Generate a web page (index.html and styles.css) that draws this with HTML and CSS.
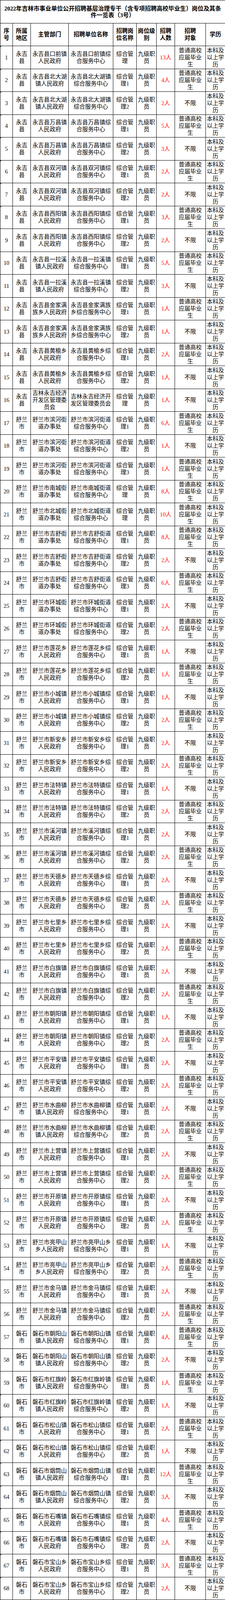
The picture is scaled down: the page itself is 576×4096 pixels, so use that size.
FILE: index.html
```html
<!DOCTYPE html>
<html lang="zh-CN">
<head>
<meta charset="utf-8">
<title>2022年吉林市事业单位公开招聘基层治理专干岗位及其条件一览表（3号）</title>
<link rel="stylesheet" href="styles.css">
</head>
<body>
<table class="jobs">
<colgroup>
<col class="c1"><col class="c2"><col class="c3"><col class="c4"><col class="c5"><col class="c6"><col class="c7"><col class="c8"><col class="c9">
</colgroup>
<thead>
<tr><th colspan="9" class="title">2022年吉林市事业单位公开招聘基层治理专干（含专项招聘高校毕业生）岗位及其条<br>件一览表（3号）</th></tr>
<tr class="head"><th>序<br>号</th><th>所属<br>地区</th><th>主管部门</th><th>招聘单位名称</th><th>招聘岗<br>位名称</th><th>岗位级<br>别</th><th>招聘<br>人数</th><th>招聘<br>对象</th><th>学历</th></tr>
</thead>
<tbody>
<tr><td class="g">1</td><td>永吉<br>县</td><td>永吉县口前镇<br>人民政府</td><td>永吉县口前镇综<br>合服务中心</td><td>综合管<br>理</td><td>九级职<br>员</td><td class="n">13人</td><td>普通高校<br>应届毕业<br>生</td><td>本科及<br>以上学<br>历</td></tr>
<tr><td class="g">2</td><td>永吉<br>县</td><td>永吉县北大湖<br>镇人民政府</td><td>永吉县北大湖镇<br>综合服务中心</td><td>综合管<br>理1</td><td>九级职<br>员</td><td class="n">4人</td><td>普通高校<br>应届毕业<br>生</td><td>本科及<br>以上学<br>历</td></tr>
<tr><td class="g">3</td><td>永吉<br>县</td><td>永吉县北大湖<br>镇人民政府</td><td>永吉县北大湖镇<br>综合服务中心</td><td>综合管<br>理2</td><td>九级职<br>员</td><td class="n">2人</td><td>不限</td><td>本科及<br>以上学<br>历</td></tr>
<tr><td class="g">4</td><td>永吉<br>县</td><td>永吉县万昌镇<br>人民政府</td><td>永吉县万昌镇综<br>合服务中心</td><td>综合管<br>理1</td><td>九级职<br>员</td><td class="n">5人</td><td>普通高校<br>应届毕业<br>生</td><td>本科及<br>以上学<br>历</td></tr>
<tr><td class="g">5</td><td>永吉<br>县</td><td>永吉县万昌镇<br>人民政府</td><td>永吉县万昌镇综<br>合服务中心</td><td>综合管<br>理2</td><td>九级职<br>员</td><td class="n">3人</td><td>不限</td><td>本科及<br>以上学<br>历</td></tr>
<tr><td class="g">6</td><td>永吉<br>县</td><td>永吉县双河镇<br>人民政府</td><td>永吉县双河镇综<br>合服务中心</td><td>综合管<br>理1</td><td>九级职<br>员</td><td class="n">2人</td><td>普通高校<br>应届毕业<br>生</td><td>本科及<br>以上学<br>历</td></tr>
<tr><td class="g">7</td><td>永吉<br>县</td><td>永吉县双河镇<br>人民政府</td><td>永吉县双河镇综<br>合服务中心</td><td>综合管<br>理2</td><td>九级职<br>员</td><td class="n">2人</td><td>不限</td><td>本科及<br>以上学<br>历</td></tr>
<tr><td class="g">8</td><td>永吉<br>县</td><td>永吉县西阳镇<br>人民政府</td><td>永吉县西阳镇综<br>合服务中心</td><td>综合管<br>理1</td><td>九级职<br>员</td><td class="n">3人</td><td>普通高校<br>应届毕业<br>生</td><td>本科及<br>以上学<br>历</td></tr>
<tr><td>9</td><td>永吉<br>县</td><td>永吉县西阳镇<br>人民政府</td><td>永吉县西阳镇综<br>合服务中心</td><td>综合管<br>理2</td><td>九级职<br>员</td><td class="n">2人</td><td>不限</td><td>本科及<br>以上学<br>历</td></tr>
<tr><td>10</td><td>永吉<br>县</td><td>永吉县一拉溪<br>镇人民政府</td><td>永吉县一拉溪镇<br>综合服务中心</td><td>综合管<br>理1</td><td>九级职<br>员</td><td class="n">5人</td><td>普通高校<br>应届毕业<br>生</td><td>本科及<br>以上学<br>历</td></tr>
<tr><td>11</td><td>永吉<br>县</td><td>永吉县一拉溪<br>镇人民政府</td><td>永吉县一拉溪镇<br>综合服务中心</td><td>综合管<br>理2</td><td>九级职<br>员</td><td class="n">3人</td><td>不限</td><td>本科及<br>以上学<br>历</td></tr>
<tr><td>12</td><td>永吉<br>县</td><td>永吉县金家满<br>族乡人民政府</td><td>永吉县金家满族<br>乡综合服务中心</td><td>综合管<br>理1</td><td>九级职<br>员</td><td class="n">1人</td><td>普通高校<br>应届毕业<br>生</td><td>本科及<br>以上学<br>历</td></tr>
<tr><td>13</td><td>永吉<br>县</td><td>永吉县金家满<br>族乡人民政府</td><td>永吉县金家满族<br>乡综合服务中心</td><td>综合管<br>理2</td><td>九级职<br>员</td><td class="n">1人</td><td>不限</td><td>本科及<br>以上学<br>历</td></tr>
<tr><td>14</td><td>永吉<br>县</td><td>永吉县黄榆乡<br>人民政府</td><td>永吉县黄榆乡综<br>合服务中心</td><td>综合管<br>理1</td><td>九级职<br>员</td><td class="n">2人</td><td>普通高校<br>应届毕业<br>生</td><td>本科及<br>以上学<br>历</td></tr>
<tr><td>15</td><td>永吉<br>县</td><td>永吉县黄榆乡<br>人民政府</td><td>永吉县黄榆乡综<br>合服务中心</td><td>综合管<br>理2</td><td>九级职<br>员</td><td class="n">1人</td><td>不限</td><td>本科及<br>以上学<br>历</td></tr>
<tr><td>16</td><td>永吉<br>县</td><td>吉林永吉经济<br>开发区管理委<br>员会</td><td>吉林永吉经济开<br>发区管理委员会</td><td>综合管<br>理</td><td>九级职<br>员</td><td class="n">1人</td><td>不限</td><td>本科及<br>以上学<br>历</td></tr>
<tr><td>17</td><td>舒兰<br>市</td><td>舒兰市滨河街<br>道办事处</td><td>舒兰市滨河街道<br>综合服务中心</td><td>综合管<br>理1</td><td>九级职<br>员</td><td class="n">6人</td><td>普通高校<br>应届毕业<br>生</td><td>本科及<br>以上学<br>历</td></tr>
<tr><td>18</td><td>舒兰<br>市</td><td>舒兰市滨河街<br>道办事处</td><td>舒兰市滨河街道<br>综合服务中心</td><td>综合管<br>理2</td><td>九级职<br>员</td><td class="n">1人</td><td>不限</td><td>本科及<br>以上学<br>历</td></tr>
<tr><td>19</td><td>舒兰<br>市</td><td>舒兰市滨河街<br>道办事处</td><td>舒兰市滨河街道<br>综合服务中心</td><td>综合管<br>理3</td><td>九级职<br>员</td><td class="n">1人</td><td>普通高校<br>应届毕业<br>生</td><td>本科及<br>以上学<br>历</td></tr>
<tr><td>20</td><td>舒兰<br>市</td><td>舒兰市南城街<br>道办事处</td><td>舒兰市南城街道<br>综合服务中心</td><td>综合管<br>理</td><td>九级职<br>员</td><td class="n">8人</td><td>普通高校<br>应届毕业<br>生</td><td>本科及<br>以上学<br>历</td></tr>
<tr><td>21</td><td>舒兰<br>市</td><td>舒兰市北城街<br>道办事处</td><td>舒兰市北城街道<br>综合服务中心</td><td>综合管<br>理</td><td>九级职<br>员</td><td class="n">10人</td><td>普通高校<br>应届毕业<br>生</td><td>本科及<br>以上学<br>历</td></tr>
<tr><td>22</td><td>舒兰<br>市</td><td>舒兰市吉舒街<br>道办事处</td><td>舒兰市吉舒街道<br>综合服务中心</td><td>综合管<br>理1</td><td>九级职<br>员</td><td class="n">8人</td><td>普通高校<br>应届毕业<br>生</td><td>本科及<br>以上学<br>历</td></tr>
<tr><td>23</td><td>舒兰<br>市</td><td>舒兰市吉舒街<br>道办事处</td><td>舒兰市吉舒街道<br>综合服务中心</td><td>综合管<br>理2</td><td>九级职<br>员</td><td class="n">2人</td><td>不限</td><td>本科及<br>以上学<br>历</td></tr>
<tr><td>24</td><td>舒兰<br>市</td><td>舒兰市吉舒街<br>道办事处</td><td>舒兰市吉舒街道<br>综合服务中心</td><td>综合管<br>理3</td><td>九级职<br>员</td><td class="n">6人</td><td>普通高校<br>应届毕业<br>生</td><td>本科及<br>以上学<br>历</td></tr>
<tr><td>25</td><td>舒兰<br>市</td><td>舒兰市环城街<br>道办事处</td><td>舒兰市环城街道<br>综合服务中心</td><td>综合管<br>理1</td><td>九级职<br>员</td><td class="n">2人</td><td>不限</td><td>本科及<br>以上学<br>历</td></tr>
<tr><td>26</td><td>舒兰<br>市</td><td>舒兰市环城街<br>道办事处</td><td>舒兰市环城街道<br>综合服务中心</td><td>综合管<br>理2</td><td>九级职<br>员</td><td class="n">2人</td><td>普通高校<br>应届毕业<br>生</td><td>本科及<br>以上学<br>历</td></tr>
<tr><td>27</td><td>舒兰<br>市</td><td>舒兰市莲花乡<br>人民政府</td><td>舒兰市莲花乡综<br>合服务中心</td><td>综合管<br>理1</td><td>九级职<br>员</td><td class="n">1人</td><td>不限</td><td>本科及<br>以上学<br>历</td></tr>
<tr><td>28</td><td>舒兰<br>市</td><td>舒兰市莲花乡<br>人民政府</td><td>舒兰市莲花乡综<br>合服务中心</td><td>综合管<br>理2</td><td>九级职<br>员</td><td class="n">1人</td><td>普通高校<br>应届毕业<br>生</td><td>本科及<br>以上学<br>历</td></tr>
<tr><td>29</td><td>舒兰<br>市</td><td>舒兰市小城镇<br>人民政府</td><td>舒兰市小城镇综<br>合服务中心</td><td>综合管<br>理1</td><td>九级职<br>员</td><td class="n">1人</td><td>不限</td><td>本科及<br>以上学<br>历</td></tr>
<tr><td>30</td><td>舒兰<br>市</td><td>舒兰市小城镇<br>人民政府</td><td>舒兰市小城镇综<br>合服务中心</td><td>综合管<br>理2</td><td>九级职<br>员</td><td class="n">2人</td><td>普通高校<br>应届毕业<br>生</td><td>本科及<br>以上学<br>历</td></tr>
<tr><td>31</td><td>舒兰<br>市</td><td>舒兰市新安乡<br>人民政府</td><td>舒兰市新安乡综<br>合服务中心</td><td>综合管<br>理1</td><td>九级职<br>员</td><td class="n">2人</td><td>不限</td><td>本科及<br>以上学<br>历</td></tr>
<tr><td>32</td><td>舒兰<br>市</td><td>舒兰市新安乡<br>人民政府</td><td>舒兰市新安乡综<br>合服务中心</td><td>综合管<br>理2</td><td>九级职<br>员</td><td class="n">2人</td><td>普通高校<br>应届毕业<br>生</td><td>本科及<br>以上学<br>历</td></tr>
<tr><td>33</td><td>舒兰<br>市</td><td>舒兰市法特镇<br>人民政府</td><td>舒兰市法特镇综<br>合服务中心</td><td>综合管<br>理1</td><td>九级职<br>员</td><td class="n">1人</td><td>不限</td><td>本科及<br>以上学<br>历</td></tr>
<tr><td>34</td><td>舒兰<br>市</td><td>舒兰市法特镇<br>人民政府</td><td>舒兰市法特镇综<br>合服务中心</td><td>综合管<br>理2</td><td>九级职<br>员</td><td class="n">2人</td><td>普通高校<br>应届毕业<br>生</td><td>本科及<br>以上学<br>历</td></tr>
<tr><td>35</td><td>舒兰<br>市</td><td>舒兰市溪河镇<br>人民政府</td><td>舒兰市溪河镇综<br>合服务中心</td><td>综合管<br>理1</td><td>九级职<br>员</td><td class="n">2人</td><td>不限</td><td>本科及<br>以上学<br>历</td></tr>
<tr><td>36</td><td>舒兰<br>市</td><td>舒兰市溪河镇<br>人民政府</td><td>舒兰市溪河镇综<br>合服务中心</td><td>综合管<br>理2</td><td>九级职<br>员</td><td class="n">2人</td><td>普通高校<br>应届毕业<br>生</td><td>本科及<br>以上学<br>历</td></tr>
<tr><td>37</td><td>舒兰<br>市</td><td>舒兰市天德乡<br>人民政府</td><td>舒兰市天德乡综<br>合服务中心</td><td>综合管<br>理1</td><td>九级职<br>员</td><td class="n">2人</td><td>不限</td><td>本科及<br>以上学<br>历</td></tr>
<tr><td>38</td><td>舒兰<br>市</td><td>舒兰市天德乡<br>人民政府</td><td>舒兰市天德乡综<br>合服务中心</td><td>综合管<br>理2</td><td>九级职<br>员</td><td class="n">2人</td><td>普通高校<br>应届毕业<br>生</td><td>本科及<br>以上学<br>历</td></tr>
<tr><td>39</td><td>舒兰<br>市</td><td>舒兰市七里乡<br>人民政府</td><td>舒兰市七里乡综<br>合服务中心</td><td>综合管<br>理1</td><td>九级职<br>员</td><td class="n">2人</td><td>不限</td><td>本科及<br>以上学<br>历</td></tr>
<tr><td>40</td><td>舒兰<br>市</td><td>舒兰市七里乡<br>人民政府</td><td>舒兰市七里乡综<br>合服务中心</td><td>综合管<br>理2</td><td>九级职<br>员</td><td class="n">2人</td><td>普通高校<br>应届毕业<br>生</td><td>本科及<br>以上学<br>历</td></tr>
<tr><td>41</td><td>舒兰<br>市</td><td>舒兰市白旗镇<br>人民政府</td><td>舒兰市白旗镇综<br>合服务中心</td><td>综合管<br>理1</td><td>九级职<br>员</td><td class="n">2人</td><td>不限</td><td>本科及<br>以上学<br>历</td></tr>
<tr><td>42</td><td>舒兰<br>市</td><td>舒兰市白旗镇<br>人民政府</td><td>舒兰市白旗镇综<br>合服务中心</td><td>综合管<br>理2</td><td>九级职<br>员</td><td class="n">2人</td><td>普通高校<br>应届毕业<br>生</td><td>本科及<br>以上学<br>历</td></tr>
<tr><td>43</td><td>舒兰<br>市</td><td>舒兰市朝阳镇<br>人民政府</td><td>舒兰市朝阳镇综<br>合服务中心</td><td>综合管<br>理1</td><td>九级职<br>员</td><td class="n">1人</td><td>不限</td><td>本科及<br>以上学<br>历</td></tr>
<tr><td>44</td><td>舒兰<br>市</td><td>舒兰市朝阳镇<br>人民政府</td><td>舒兰市朝阳镇综<br>合服务中心</td><td>综合管<br>理2</td><td>九级职<br>员</td><td class="n">2人</td><td>普通高校<br>应届毕业<br>生</td><td>本科及<br>以上学<br>历</td></tr>
<tr><td>45</td><td>舒兰<br>市</td><td>舒兰市平安镇<br>人民政府</td><td>舒兰市平安镇综<br>合服务中心</td><td>综合管<br>理1</td><td>九级职<br>员</td><td class="n">2人</td><td>不限</td><td>本科及<br>以上学<br>历</td></tr>
<tr><td>46</td><td>舒兰<br>市</td><td>舒兰市平安镇<br>人民政府</td><td>舒兰市平安镇综<br>合服务中心</td><td>综合管<br>理2</td><td>九级职<br>员</td><td class="n">2人</td><td>普通高校<br>应届毕业<br>生</td><td>本科及<br>以上学<br>历</td></tr>
<tr><td>47</td><td>舒兰<br>市</td><td>舒兰市水曲柳<br>镇人民政府</td><td>舒兰市水曲柳镇<br>综合服务中心</td><td>综合管<br>理1</td><td>九级职<br>员</td><td class="n">2人</td><td>不限</td><td>本科及<br>以上学<br>历</td></tr>
<tr><td>48</td><td>舒兰<br>市</td><td>舒兰市水曲柳<br>镇人民政府</td><td>舒兰市水曲柳镇<br>综合服务中心</td><td>综合管<br>理2</td><td>九级职<br>员</td><td class="n">2人</td><td>普通高校<br>应届毕业<br>生</td><td>本科及<br>以上学<br>历</td></tr>
<tr><td>49</td><td>舒兰<br>市</td><td>舒兰市上营镇<br>人民政府</td><td>舒兰市上营镇综<br>合服务中心</td><td>综合管<br>理1</td><td>九级职<br>员</td><td class="n">2人</td><td>不限</td><td>本科及<br>以上学<br>历</td></tr>
<tr><td>50</td><td>舒兰<br>市</td><td>舒兰市上营镇<br>人民政府</td><td>舒兰市上营镇综<br>合服务中心</td><td>综合管<br>理2</td><td>九级职<br>员</td><td class="n">2人</td><td>普通高校<br>应届毕业<br>生</td><td>本科及<br>以上学<br>历</td></tr>
<tr><td>51</td><td>舒兰<br>市</td><td>舒兰市开原镇<br>人民政府</td><td>舒兰市开原镇综<br>合服务中心</td><td>综合管<br>理1</td><td>九级职<br>员</td><td class="n">2人</td><td>不限</td><td>本科及<br>以上学<br>历</td></tr>
<tr><td>52</td><td>舒兰<br>市</td><td>舒兰市开原镇<br>人民政府</td><td>舒兰市开原镇综<br>合服务中心</td><td>综合管<br>理2</td><td>九级职<br>员</td><td class="n">2人</td><td>普通高校<br>应届毕业<br>生</td><td>本科及<br>以上学<br>历</td></tr>
<tr><td>53</td><td>舒兰<br>市</td><td>舒兰市亮甲山<br>乡人民政府</td><td>舒兰市亮甲山乡<br>综合服务中心</td><td>综合管<br>理1</td><td>九级职<br>员</td><td class="n">1人</td><td>不限</td><td>本科及<br>以上学<br>历</td></tr>
<tr><td>54</td><td>舒兰<br>市</td><td>舒兰市亮甲山<br>乡人民政府</td><td>舒兰市亮甲山乡<br>综合服务中心</td><td>综合管<br>理2</td><td>九级职<br>员</td><td class="n">2人</td><td>普通高校<br>应届毕业<br>生</td><td>本科及<br>以上学<br>历</td></tr>
<tr><td>55</td><td>舒兰<br>市</td><td>舒兰市金马镇<br>人民政府</td><td>舒兰市金马镇综<br>合服务中心</td><td>综合管<br>理1</td><td>九级职<br>员</td><td class="n">2人</td><td>不限</td><td>本科及<br>以上学<br>历</td></tr>
<tr><td>56</td><td>舒兰<br>市</td><td>舒兰市金马镇<br>人民政府</td><td>舒兰市金马镇综<br>合服务中心</td><td>综合管<br>理2</td><td>九级职<br>员</td><td class="n">2人</td><td>普通高校<br>应届毕业<br>生</td><td>本科及<br>以上学<br>历</td></tr>
<tr><td>57</td><td>磐石<br>市</td><td>磐石市朝阳山<br>镇人民政府</td><td>磐石市朝阳山镇<br>综合服务中心</td><td>综合管<br>理1</td><td>九级职<br>员</td><td class="n">4人</td><td>普通高校<br>应届毕业<br>生</td><td>本科及<br>以上学<br>历</td></tr>
<tr><td>58</td><td>磐石<br>市</td><td>磐石市朝阳山<br>镇人民政府</td><td>磐石市朝阳山镇<br>综合服务中心</td><td>综合管<br>理2</td><td>九级职<br>员</td><td class="n">2人</td><td>不限</td><td>本科及<br>以上学<br>历</td></tr>
<tr><td>59</td><td>磐石<br>市</td><td>磐石市红旗岭<br>镇人民政府</td><td>磐石市红旗岭镇<br>综合服务中心</td><td>综合管<br>理1</td><td>九级职<br>员</td><td class="n">1人</td><td>普通高校<br>应届毕业<br>生</td><td>本科及<br>以上学<br>历</td></tr>
<tr><td class="g">60</td><td>磐石<br>市</td><td>磐石市红旗岭<br>镇人民政府</td><td>磐石市红旗岭镇<br>综合服务中心</td><td>综合管<br>理2</td><td>九级职<br>员</td><td class="n">1人</td><td>不限</td><td>本科及<br>以上学<br>历</td></tr>
<tr><td class="g">61</td><td>磐石<br>市</td><td>磐石市松山镇<br>人民政府</td><td>磐石市松山镇综<br>合服务中心</td><td>综合管<br>理1</td><td>九级职<br>员</td><td class="n">2人</td><td>普通高校<br>应届毕业<br>生</td><td>本科及<br>以上学<br>历</td></tr>
<tr><td class="g">62</td><td>磐石<br>市</td><td>磐石市松山镇<br>人民政府</td><td>磐石市松山镇综<br>合服务中心</td><td>综合管<br>理2</td><td>九级职<br>员</td><td class="n">1人</td><td>不限</td><td>本科及<br>以上学<br>历</td></tr>
<tr><td class="g">63</td><td>磐石<br>市</td><td>磐石市烟筒山<br>镇人民政府</td><td>磐石市烟筒山镇<br>综合服务中心</td><td>综合管<br>理1</td><td>九级职<br>员</td><td class="n">12人</td><td>普通高校<br>应届毕业<br>生</td><td>本科及<br>以上学<br>历</td></tr>
<tr><td class="g">64</td><td>磐石<br>市</td><td>磐石市烟筒山<br>镇人民政府</td><td>磐石市烟筒山镇<br>综合服务中心</td><td>综合管<br>理2</td><td>九级职<br>员</td><td class="n">3人</td><td>不限</td><td>本科及<br>以上学<br>历</td></tr>
<tr><td class="g">65</td><td>磐石<br>市</td><td>磐石市石嘴镇<br>人民政府</td><td>磐石市石嘴镇综<br>合服务中心</td><td>综合管<br>理1</td><td>九级职<br>员</td><td class="n">4人</td><td>普通高校<br>应届毕业<br>生</td><td>本科及<br>以上学<br>历</td></tr>
<tr><td class="g">66</td><td>磐石<br>市</td><td>磐石市石嘴镇<br>人民政府</td><td>磐石市石嘴镇综<br>合服务中心</td><td>综合管<br>理2</td><td>九级职<br>员</td><td class="n">2人</td><td>不限</td><td>本科及<br>以上学<br>历</td></tr>
<tr><td class="g">67</td><td>磐石<br>市</td><td>磐石市宝山乡<br>人民政府</td><td>磐石市宝山乡综<br>合服务中心</td><td>综合管<br>理1</td><td>九级职<br>员</td><td class="n">3人</td><td>普通高校<br>应届毕业<br>生</td><td>本科及<br>以上学<br>历</td></tr>
<tr><td class="g">68</td><td>磐石<br>市</td><td>磐石市宝山乡<br>人民政府</td><td>磐石市宝山乡综<br>合服务中心</td><td>综合管<br>理2</td><td>九级职<br>员</td><td class="n">2人</td><td>不限</td><td>本科及<br>以上学<br>历</td></tr>
</tbody>
</table>
</body>
</html>
```
FILE: styles.css
```css
html, body {
  margin: 0;
  padding: 0;
  background: #ffffff;
}

body {
  font-family: "Liberation Serif", "Noto Sans CJK SC", serif;
  color: #000000;
}

.jobs {
  width: 576px;
  border-collapse: collapse;
  table-layout: fixed;
}

.c1 { width: 32px; }
.c2 { width: 46px; }
.c3 { width: 97px; }
.c4 { width: 114px; }
.c5 { width: 60px; }
.c6 { width: 51px; }
.c7 { width: 47px; }
.c8 { width: 79px; }
.c9 { width: 50px; }

.jobs tr {
  height: 58.5px;
}

.jobs th,
.jobs td {
  border: 1px solid #000000;
  padding: 0 1px;
  text-align: center;
  vertical-align: middle;
  white-space: nowrap;
  font-size: 14.7px;
  line-height: 18.1px;
  overflow: hidden;
}

.jobs td {
  font-weight: 400;
}

.jobs .title {
  font-size: 15px;
  line-height: 17.7px;
  font-weight: 700;
  padding-top: 3px;
}

.head th {
  font-weight: 700;
}

.jobs td.n {
  color: #ff0000;
}

.jobs td.g {
  position: relative;
}

.jobs td.g::before {
  content: "";
  position: absolute;
  left: 0;
  top: 0;
  border-top: 3px solid #1f7a1f;
  border-right: 3px solid transparent;
}
```
